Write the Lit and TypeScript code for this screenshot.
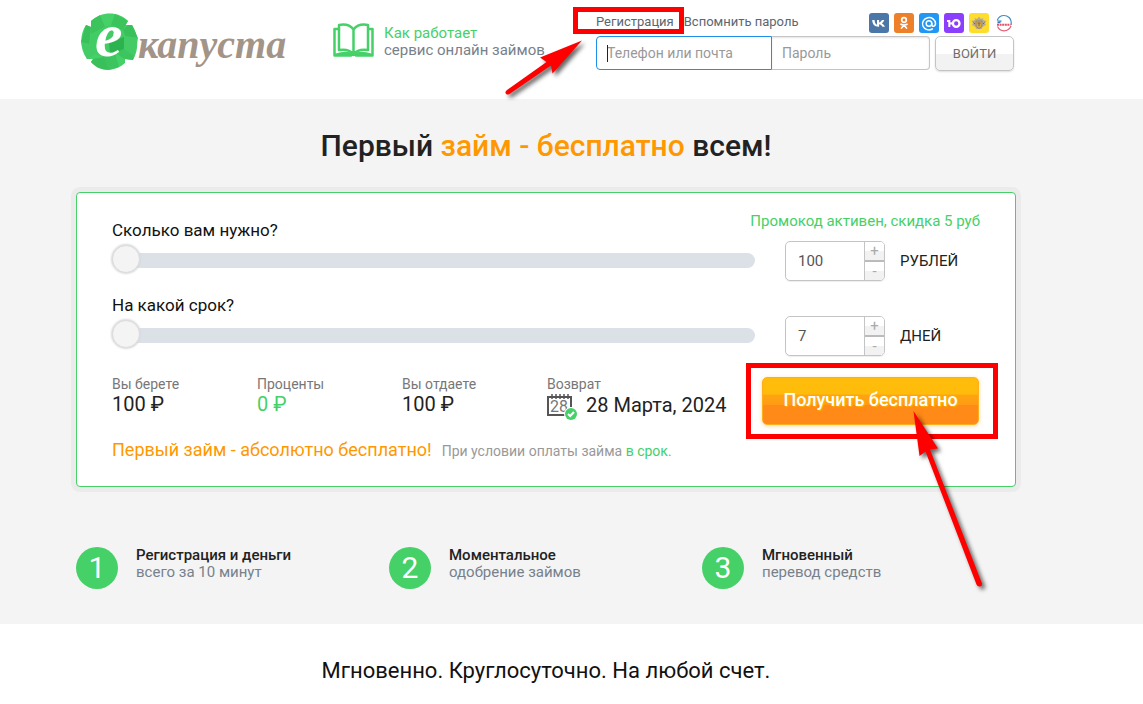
import { LitElement, html, css, svg } from "lit";
import { customElement, property, state } from "lit/decorators.js";

const socials = [
  {
    name: "ВКонтакте",
    art: svg`<rect width="20" height="20" rx="3" fill="#4a76a8"/><path d="M3.2 7H5.500C5.700 9.500 6.800 11.300 8 11.700V7H10.100V9.500C11.300 9.300 12.400 8.100 12.900 7H15.300C14.800 8.500 13.800 9.700 12.900 10.400C14.100 11 15.200 12 16 13.700H13.400C12.800 12.600 11.700 11.600 10.100 11.300V13.700H9.500C5.700 13.700 3.300 11.200 3.200 7Z" fill="#fff"/>`,
  },
  {
    name: "Одноклассники",
    art: svg`<rect width="20" height="20" rx="3" fill="#ed812b"/><g fill="none" stroke="#fff" stroke-width="1.700" stroke-linecap="round"><circle cx="10" cy="7" r="2.300"/><path d="M7 11.300C8.800 12.400 11.200 12.400 13 11.300M10 12.200L7.500 15M10 12.200L12.500 15"/></g>`,
  },
  {
    name: "Mail.ru",
    art: svg`<rect width="20" height="20" rx="3" fill="#2196f3"/><g fill="none" stroke="#fff" stroke-width="1.500" stroke-linecap="round"><circle cx="10" cy="10.500" r="2.800"/><path d="M12.800 10.500V11.500C12.800 14 16.500 13.800 16.500 10.500A6.500 6.200 0 1 0 13.400 16"/></g>`,
  },
  {
    name: "ЮMoney",
    art: svg`<rect width="20" height="20" rx="3" fill="#8b3ffd"/><path d="M3 7H6.300V14H4.300V9H3Z" fill="#fff"/><path d="M6 9.300H8.500V11.500H6Z" fill="#fff"/><circle cx="12.200" cy="10.500" r="3.300" fill="none" stroke="#fff" stroke-width="2.300"/>`,
  },
  {
    name: "Тинькофф",
    art: svg`<rect width="20" height="20" rx="3" fill="#ffdd2d"/><path d="M2.500 8L6 7L5.500 5L8 6L10 3.800L12 6L14.500 5L14 7L17.500 8L16 10L17 12L14 13.500L12.500 16H10L7.500 16L6 13.500L3 12L4 10Z" fill="#b5aa94"/><path d="M7 8H13V12C13 14 11 14.800 10 15.500C9 14.800 7 14 7 12Z" fill="#dba93b" stroke="#8d826e" stroke-width=".8"/><path d="M8.500 10H11.500M10 10V13M4.500 9.500L6 11M15.500 9.500L14 11" stroke="#75695a"/>`,
  },
  {
    name: "Госуслуги",
    art: svg`<rect width="20" height="20" rx="3" fill="#fff"/><path d="M3.200 7.500C4.500 4 7 2.500 10 2.500C14 2.500 17.200 5.500 17.200 9V12" fill="none" stroke="#3f8dc6" stroke-width="1.200"/><path d="M3.500 13.500C5 16.500 7.500 17.800 10 17.800C13 17.800 15.500 16.500 17 13" fill="none" stroke="#e75c72" stroke-width="1.200"/><path d="M3.500 8.200H7.500M3.500 9.700H6.500" stroke="#307fbd" stroke-width="1.200"/><path d="M3 11.700H16.500" stroke="#e54e66" stroke-width="2" stroke-dasharray="2 .6"/>`,
  },
];

@customElement("brand-logo")
class BrandLogo extends LitElement {
  static styles = css`
    :host { display: block; }
    .link { display: flex; align-items: flex-start; text-decoration: none; }
    .badge { display: block; flex: none; overflow: visible; }
    .letter { font: italic bold 62px "Liberation Serif", serif; }
    .word { font: italic bold 40px/56px "Liberation Serif", serif; color: #a39488; padding-top: 4px; }
  `;
  render() {
    return html`<a class="link" href="#" aria-label="екапуста">
      <svg class="badge" width="57" height="57" viewBox="0 0 57 57">
        <path d="M10 8C20 -2 38 -2 47 8L44 12L51 12C58 22 58 37 52 47L44 46L44 50C34 59 20 59 10 49L12 46L6 46C-2 35-1 21 5 12L10 14Z" fill="#46d068"/>
        <path d="M19 2L24 14L10 21V8ZM34 1L30 12L42 17L47 8Z" fill="#3bc35c"/>
        <path d="M47 12H51L57 25L44 23L42 17ZM5 12L10 14L8 31L0 29Z" fill="#39c05a"/>
        <path d="M0 29L8 31L14 41L6 46ZM57 25L44 23L43 36L53 43Z" fill="#43cb65"/>
        <path d="M43 36L53 43L52 47L44 46L34 40ZM23 44L34 40L38 54L28 57Z" fill="#3cc55e"/>
        <path d="M10 21L24 14L30 12L42 17L44 23L43 36L34 40L23 44L14 41L8 31Z" fill="#42cc65"/>
        <path d="M28 29L43 24L43 36L29 42Z" fill="#2cb34f"/>
        <path d="M12 46L23 44L28 57C20 57 14 54 10 49Z" fill="#39c05a"/>
        <text class="letter" x="14" y="43" fill="#fff">е</text>
      </svg>
      <span class="word">капуста</span>
    </a>`;
  }
}

@customElement("amount-field")
class AmountField extends LitElement {
  @property() label = "";
  @property() unit = "";
  @property() note = "";
  @property({ type: Number }) value = 0;
  @property({ type: Number }) min = 0;
  @property({ type: Number }) max = 100;
  @property({ type: Number }) step = 1;
  static styles = css`
    :host { display: block; }
    .row { display: grid; grid-template-columns: minmax(0, 1fr) 195px; column-gap: 30px; align-items: end; }
    .label { display: block; font-size: 17px; line-height: 20px; margin-bottom: 5px; color: #111; }
    .slider-cell { padding-bottom: 6px; }
    .side { display: flex; flex-direction: column; }
    .note { align-self: flex-end; white-space: nowrap; font-size: 15px; line-height: 20px; margin-bottom: 10px; color: #46d068; }
    .slider { -webkit-appearance: none; appearance: none; display: block; width: 100%; height: 30px; margin: 0; background: transparent; }
    .slider::-webkit-slider-runnable-track { height: 15px; border-radius: 8px; background: #dce1e8; }
    .slider::-webkit-slider-thumb { -webkit-appearance: none; width: 28px; height: 28px; margin-top: -8px; border-radius: 50%; border: 1px solid #dcdcdc; background: #f4f4f4; box-shadow: 0 0 2px 1px #d8dadc; }
    .entry { display: flex; align-items: center; }
    .stepper { display: flex; width: 100px; height: 40px; box-sizing: border-box; border: 1px solid #c4c4c4; border-radius: 5px; box-shadow: 0 1px 1px #eee; }
    .number { flex: 1; min-width: 0; box-sizing: border-box; border: 0; padding: 0 12px; background: transparent; font: 15px Roboto, sans-serif; color: #555; outline: 0; }
    .buttons { display: flex; flex-direction: column; width: 19px; border-left: 1px solid #c4c4c4; }
    .button { flex: 1; border: 0; padding: 0; margin: 0; background: linear-gradient(#fff 50%, #f2f2f2 50%); color: #aaa; font: 15px/17px Roboto, sans-serif; }
    .button:first-child { border-bottom: 2px solid #bbb; border-top-right-radius: 4px; }
    .button:last-child { border-bottom-right-radius: 4px; }
    .unit { margin-left: 15px; font-size: 15px; color: #222; }
  `;
  private change(n: number) {
    this.value = Math.min(this.max, Math.max(this.min, n || this.min));
    this.dispatchEvent(new CustomEvent("amount", { detail: this.value }));
  }
  render() {
    return html`<div class="row">
      <div class="slider-cell">
        <label class="label" for="slider">${this.label}</label>
        <input class="slider" id="slider" type="range" min=${this.min} max=${this.max} step=${this.step} .value=${String(this.value)}
          @input=${(e: Event) => this.change(Number((e.target as HTMLInputElement).value))} />
      </div>
      <div class="side">
        ${this.note ? html`<span class="note">${this.note}</span>` : ""}
        <div class="entry">
          <div class="stepper">
            <input class="number" id="number" type="text" inputmode="numeric" aria-label=${this.label} .value=${String(this.value)}
              @change=${(e: Event) => this.change(Number((e.target as HTMLInputElement).value))} />
            <div class="buttons">
              <button class="button" aria-label="Больше" @click=${() => this.change(this.value + this.step)}>+</button>
              <button class="button" aria-label="Меньше" @click=${() => this.change(this.value - this.step)}>-</button>
            </div>
          </div>
          <label class="unit" for="number">${this.unit}</label>
        </div>
      </div>
    </div>`;
  }
}

@customElement("app-root")
class AppRoot extends LitElement {
  @state() private amount = 100;
  static styles = css`
    :host { display: block; font-family: Roboto, sans-serif; color: #222; background: #fff; }
    * { box-sizing: border-box; }
    a { color: inherit; text-decoration: none; }
    .band { padding: 0 51px 0 0; }
    .wrap { max-width: 940px; margin: 0 auto; }
    .gray { background: #f4f4f4; }

    .header { display: grid; grid-template-columns: 257px 263px minmax(0, 1fr); align-items: start; padding: 13px 0 26px; }
    .logo { padding-left: 5px; }
    .how { display: flex; gap: 10px; padding-top: 10px; font-size: 15px; line-height: 17px; color: #77818c; white-space: nowrap; }
    .how-title { display: block; color: #46d068; }
    .how-text { padding-top: 2px; }
    .login-top { display: flex; justify-content: space-between; align-items: flex-start; height: 23px; padding-right: 2px; font-size: 13px; line-height: 17px; color: #5c666f; }
    .links { display: flex; gap: 10px; }
    .socials { display: flex; gap: 5px; }
    .social { display: block; height: 20px; }
    .form { display: flex; align-items: flex-start; padding-right: 2px; }
    .login-box { position: relative; width: 176px; }
    .input { display: block; width: 100%; height: 34px; border: 1px solid #c4c4c4; padding: 0 10px; font: 14px Roboto, sans-serif; color: #333; background: transparent; outline: 0; }
    .input::placeholder { color: #999; opacity: 1; }
    .input-login { border-color: #1e90e8; border-radius: 4px 0 0 4px; }
    .input-password { flex: 1; min-width: 0; border-left: 0; border-radius: 0 4px 4px 0; box-shadow: inset 0 1px 2px #e4e4e4; }
    .caret { position: absolute; left: 11px; top: 9px; width: 1px; height: 17px; background: #222; }
    .enter { width: 79px; height: 35px; margin-left: 5px; border: 1px solid #c4c4c4; border-radius: 5px; background: linear-gradient(#fff 52%, #f2f2f2 52%); box-shadow: 0 1px 2px #ddd; color: #6e6e6e; font: 13px Roboto, sans-serif; padding: 0; text-transform: uppercase; }

    .marked { position: relative; }
    .frame { position: absolute; border: 5px solid #f00; pointer-events: none; }
    .frame-link { inset: -6px -10px -4px -23px; }
    .frame-cta { inset: -14px -19px -14px -16px; }
    .arrow { position: absolute; overflow: visible; pointer-events: none; filter: drop-shadow(3px 3px 2px rgba(0, 0, 0, 0.6)); z-index: 2; }
    .arrow-login { left: -96px; top: 0; }
    .arrow-cta { left: 150px; top: 33px; }

    .title { margin: 0; padding: 28px 0; font-size: 30px; line-height: 37px; font-weight: 500; text-align: center; }
    .accent { color: #ff9800; }
    .card { border: 1px solid #46d068; border-radius: 4px; background: #fff; padding: 18px 35px 23px; box-shadow: 0 0 0 5px #ebebeb; }
    .second { margin-top: 14px; }
    .summary { display: flex; justify-content: space-between; margin-top: 20px; }
    .facts { display: grid; grid-template-columns: repeat(3, 145px) auto; margin: 0; }
    .fact { margin: 0; font-size: 14px; line-height: 16px; color: #777; }
    .value { margin: 0; font-size: 20px; line-height: 24px; color: #222; white-space: nowrap; }
    .free { color: #46d068; }
    .date { display: flex; gap: 9px; line-height: 26px; }
    .calendar { font: 16px Roboto, sans-serif; }
    .cta-box { position: relative; width: 217px; height: 48px; margin: 1px 1px 0 0; }
    .cta { width: 100%; height: 100%; border: 1px solid #ffae1c; border-radius: 5px; padding: 0 0 3px; background: linear-gradient(#ffbc0b 34%, #ffa411 38%, #ff9b14 58%, #ff8a17 59%); box-shadow: 0 1px 4px #ffd99a; color: #fff; font: 500 18px Roboto, sans-serif; text-shadow: 1px 1px 1px #ffb400; }
    .terms { display: flex; gap: 10px; margin: 13px 0 0; line-height: 24px; font-size: 14px; color: #999; align-items: baseline; }
    .terms-main { font-size: 18px; color: #ff9800; }

    .steps { display: grid; grid-template-columns: repeat(3, 313px); margin: 0; padding: 60px 0 35px; list-style: none; }
    .step { display: flex; gap: 18px; font-size: 15px; line-height: 17px; color: #77818c; }
    .circle { flex: none; width: 42px; height: 42px; border-radius: 50%; background: #46d068; color: #fff; font-size: 30px; line-height: 42px; text-align: center; }
    .step-title { display: block; font-weight: 500; color: #222; }
    .bottom { padding: 33px 0; font-size: 22px; line-height: 28px; font-weight: 400; text-align: center; color: #111; }
  `;

  render() {
    return html`
      <header class="band">
        <div class="wrap header">
          <brand-logo class="logo"></brand-logo>
          <a class="how" href="#">
            <svg width="41" height="34" viewBox="0 0 41 34" fill="none" stroke="#46d068" stroke-width="2.500" stroke-linejoin="round">
              <path d="M20.500 6.500C17 2 11 1 6 2V27C12 26 17 27 20.500 31C24 27 29 26 35 27V2C30 1 24 2 20.500 6.500ZM20.500 6.500V31"/>
              <path d="M6 6H1.500V32.500H18L20.500 31L23 32.500H39.500V6H35M2 32L8 30.500C13 29.500 17 30 20.500 32C24 30 28 29.500 33 30.500L39 32"/>
            </svg>
            <span class="how-text"><span class="how-title">Как работает</span>сервис онлайн займов</span>
          </a>
          <div>
            <div class="login-top">
              <nav class="links">
                <span class="marked"><a href="#">Регистрация</a><span class="frame frame-link"></span></span>
                <a href="#">Вспомнить пароль</a>
              </nav>
              <div class="socials">
                ${socials.map((s) => html`<a class="social" href="#" aria-label=${s.name}><svg width="20" height="20" viewBox="0 0 20 20">${s.art}</svg></a>`)}
              </div>
            </div>
            <form class="form" @submit=${(e: Event) => e.preventDefault()}>
              <div class="login-box">
                <input class="input input-login" type="text" placeholder="Телефон или почта" aria-label="Телефон или почта" />
                <span class="caret"></span>
                <svg class="arrow arrow-login" width="90" height="62" viewBox="500 36 90 62">
                  <path d="M582 40.500L552.500 73.500L551 65.500L509.500 94Q506.500 95.500 505.500 93Q505 91.500 507 90L546.500 62L540 57.500Z" fill="#f00"/>
                </svg>
              </div>
              <input class="input input-password" type="password" placeholder="Пароль" aria-label="Пароль" />
              <button class="enter">войти</button>
            </form>
          </div>
        </div>
      </header>

      <main>
        <section class="band gray">
          <div class="wrap">
            <h1 class="title">Первый <span class="accent">займ - бесплатно</span> всем!</h1>
            <div class="card">
              <amount-field label="Сколько вам нужно?" unit="РУБЛЕЙ" note="Промокод активен, скидка 5 руб" .value=${100} .min=${100} .max=${30000} .step=${100}
                @amount=${(e: CustomEvent) => (this.amount = e.detail)}></amount-field>
              <amount-field class="second" label="На какой срок?" unit="ДНЕЙ" .value=${7} .min=${7} .max=${21}></amount-field>
              <div class="summary">
                <div class="facts">
                  <div><p class="fact">Вы берете</p><p class="value">${this.amount} ₽</p></div>
                  <div><p class="fact">Проценты</p><p class="value free">0 ₽</p></div>
                  <div><p class="fact">Вы отдаете</p><p class="value">${this.amount} ₽</p></div>
                  <div>
                    <p class="fact">Возврат</p>
                    <div class="value date">
                      <svg width="30" height="29" viewBox="0 0 30 29">
                        <path d="M24 15V5H1V23H19" fill="none" stroke="#555" stroke-width="2"/>
                        <path d="M5 2V7M9 2V7M13 2V7M17 2V7M21 2V7" stroke="#555" stroke-width="1.500"/>
                        <text class="calendar" x="3" y="20" fill="#777">28</text>
                        <circle cx="24" cy="22" r="7" fill="#fff"/><circle cx="24" cy="22" r="6" fill="#46d068"/>
                        <path d="M21 22L23.200 24L27 20" fill="none" stroke="#fff" stroke-width="2"/>
                      </svg>
                      <span>28 Марта, 2024</span>
                    </div>
                  </div>
                </div>
                <div class="cta-box">
                  <button class="cta">Получить бесплатно</button>
                  <span class="frame frame-cta"></span>
                  <svg class="arrow arrow-cta" width="76" height="180" viewBox="912 410 76 180">
                    <path d="M913.500 411L938 448.500L930 449.500L982 583.500Q982.500 586 980 586.500Q977.500 587 976.500 584.500L925.500 451.500L919.500 456Z" fill="#f00"/>
                  </svg>
                </div>
              </div>
              <p class="terms"><span class="terms-main">Первый займ - абсолютно бесплатно!</span><span>При условии оплаты займа <a class="free" href="#">в срок</a>.</span></p>
            </div>
            <ol class="steps">
              <li class="step"><span class="circle">1</span><span><span class="step-title">Регистрация и деньги</span>всего за 10 минут</span></li>
              <li class="step"><span class="circle">2</span><span><span class="step-title">Моментальное</span>одобрение займов</span></li>
              <li class="step"><span class="circle">3</span><span><span class="step-title">Мгновенный</span>перевод средств</span></li>
            </ol>
          </div>
        </section>
        <section class="band">
          <h2 class="wrap bottom">Мгновенно. Круглосуточно. На любой счет.</h2>
        </section>
      </main>
    `;
  }
}
